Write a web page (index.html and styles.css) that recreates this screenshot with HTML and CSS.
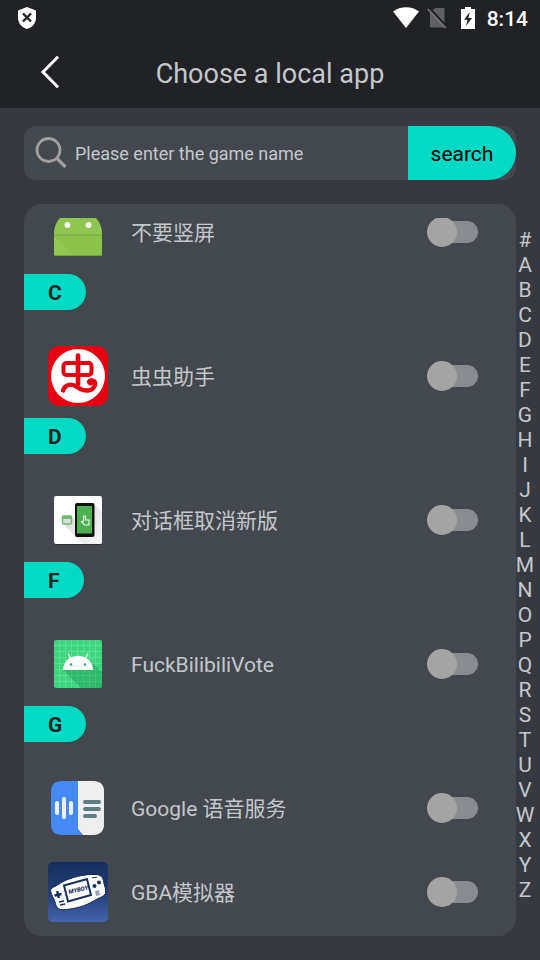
FILE: index.html
```html
<!DOCTYPE html>
<html lang="en">
<head>
<meta charset="utf-8">
<meta name="viewport" content="width=device-width, initial-scale=1">
<title>Choose a local app</title>
<link rel="stylesheet" href="styles.css">
</head>
<body>
<div class="statusbar">
  <svg class="status-shield" width="20" height="24" viewBox="0 0 20 24"><path d="M10 1 19 4.500V12C19 17.500 15 21.500 10 23 5 21.500 1 17.500 1 12V4.500Z" fill="#fff"/><path d="m6 7.500 8 8m0-8-8 8" stroke="#212226" stroke-width="2.400"/></svg>
  <div class="status-right">
    <svg class="wifi" width="26" height="22" viewBox="0 0 26 22"><path d="M0 4.500C7-1.200 19-1.200 26 4.500L13 21Z" fill="#fff"/></svg>
    <svg class="sim" width="20" height="22" viewBox="0 0 20 22"><path d="M8 1h8.500q1 0 1 1v17.500q0 1-1 1H4q-1 0-1-1V6Z" fill="#5f6063"/><path d="m2.500 1 18 19.500" stroke="#212226" stroke-width="2"/><path d="m.700 2 18 19" stroke="#77787a" stroke-width="1.600"/></svg>
    <svg class="battery" width="14" height="22" viewBox="0 0 14 22"><path d="M4 0h6v2h4v20H0V2h4Z" fill="#fff"/><path d="M8.700 5 3 12.700h3.500L5 19l6-8H7.400Z" fill="#212226"/></svg>
    <span class="clock">8:14</span>
  </div>
</div>
<header class="titlebar">
  <button class="back" aria-label="Back"><svg width="20" height="34" viewBox="0 0 20 34"><path d="M18 1.800 3 17l15 15.200" fill="none" stroke="#fff" stroke-width="3"/></svg></button>
  <h1>Choose a local app</h1>
</header>
<form class="search">
  <label class="search-icon" for="query" aria-label="Game name"><svg width="32" height="32" viewBox="0 0 32 32" fill="none" stroke="#a09f9e"><circle cx="13.500" cy="13" r="11.500" stroke-width="2.800"/><path d="m21.500 21 9 9" stroke-width="3.200"/></svg></label>
  <input id="query" type="text" placeholder="Please enter the game name">
  <button type="button">search</button>
</form>
<main class="content">
  <section class="card">
    <div class="viewport">
      <div class="apps">
        <div class="row">
          <svg class="icon" viewBox="0 0 60 60"><path d="M6 32C6 24 9 19 13 15H47c4 4 7 9 7 17v20q0 2-2 2H8q-2 0-2-2Z" fill="#8fc550"/><path d="M6 33h48v19q0 2-2 2H24L6 35Z" fill="#8bc34a"/><path d="m6 34 20 20H8q-2 0-2-2Z" fill="#91c854"/><path d="M6 33h48" stroke="#76a840"/><path d="M7 53.500h46" stroke="#74a33e"/><circle cx="19.500" cy="23" r="3" fill="#f3f5ef"/><circle cx="40.500" cy="23" r="3" fill="#f3f5ef"/></svg>
          <label for="a1">不要竖屏</label><input id="a1" class="switch" type="checkbox" role="switch">
        </div>
        <h2>C</h2>
        <div class="row">
          <svg class="icon" viewBox="0 0 60 60"><rect width="60" height="60" rx="11" fill="#e60012"/><circle cx="30" cy="30" r="27" fill="#fff"/><g fill="none" stroke="#e60012" stroke-linecap="round" stroke-linejoin="round"><rect x="15.500" y="17" width="28" height="12" rx="3" stroke-width="4"/><path d="M30 9.500V38" stroke-width="4.600"/><path d="M15 44.500C17 38 24 37 29 41c7 5 16 5 18-2 1-5-5-6-6-3" stroke-width="4.400"/><path d="M41 36c0 3 3 3 3 1" stroke-width="2.500"/></g></svg>
          <label for="a2">虫虫助手</label><input id="a2" class="switch" type="checkbox" role="switch">
        </div>
        <h2>D</h2>
        <div class="row">
          <svg class="icon" viewBox="0 0 60 60"><defs><linearGradient id="shade" x2="1" y2="1"><stop stop-color="#d8d8d8"/><stop offset="1" stop-color="#f6f6f6"/></linearGradient></defs><rect x="6" y="7" width="48" height="48" rx="2" fill="#2d3034"/><rect x="6" y="6" width="48" height="48" rx="2" fill="#fff"/><path d="m46 14 8 8v30q0 2-2 2H35L15 34l8-8 8 8V14Z" fill="url(#shade)"/><rect x="27" y="13" width="19.500" height="34" rx="2" fill="#111"/><rect x="29" y="16" width="15" height="27.500" fill="#4caf50"/><rect x="14.500" y="26" width="9" height="8" rx="1" fill="#ddd" stroke="#72b875" stroke-width="1.500"/><path d="M14 26h10v3H14Z" fill="#72b875"/><path d="M35.500 31v-5h2v4h3.500v5h-4.500l-3-3.500Z" fill="none" stroke="#e9f5e9" stroke-width="1.200"/></svg>
          <label for="a3">对话框取消新版</label><input id="a3" class="switch" type="checkbox" role="switch">
        </div>
        <h2>F</h2>
        <div class="row">
          <svg class="icon" viewBox="0 0 60 60"><rect x="6" y="6" width="48" height="48" rx="2" fill="#3dd680"/><path d="M11.500 6v48m6-48v48m6-48v48m6-48v48m6-48v48m6-48v48m6-48v48M6 11.500h48m-48 6h48m-48 6h48m-48 6h48m-48 6h48m-48 6h48m-48 6h48" stroke="#68e39d" stroke-width=".7"/><path d="m15 36 18 18h19q2 0 2-2V38l-9-9v7Z" fill="#198c54" opacity=".38"/><path d="M15 36C16 17 44 17 45 36Z" fill="#fff"/><path d="m23 25-3-5.500M37 25l3-5.500" stroke="#e9fff2" stroke-width="1.400"/><circle cx="23" cy="30.500" r="1.300" fill="#35a56a"/><circle cx="37" cy="30.500" r="1.300" fill="#35a56a"/></svg>
          <label for="a4">FuckBilibiliVote</label><input id="a4" class="switch" type="checkbox" role="switch">
        </div>
        <h2>G</h2>
        <div class="row">
          <svg class="icon" viewBox="0 0 60 60"><path d="M30 2.500h15q11 0 11 11v31q0 11-11 11H36l-6-6Z" transform="translate(0 1)" fill="#eeeeef"/><path d="M14 3h16v47q0 2 5 7H14Q3 57 3 46V14Q3 3 14 3Z" fill="#4688f4"/><path d="M30 3h15q11 0 11 11v31q0 12-11 12H35l-5-6Z" fill="#eeeeef"/><g stroke-linecap="round" stroke-width="4"><path d="M9 25v10m7-14v18m7-14v10" stroke="#eaf1fc"/><path d="M37 24h14m-14 7h14m-14 7h10" stroke="#607d86"/></g></svg>
          <label for="a5">Google 语音服务</label><input id="a5" class="switch" type="checkbox" role="switch">
        </div>
        <div class="row">
          <svg class="icon" viewBox="0 0 60 60"><defs><linearGradient id="night" x2="0" y2="1"><stop stop-color="#172e5e"/><stop offset=".5" stop-color="#203d76"/><stop offset="1" stop-color="#4364ad"/></linearGradient></defs><rect width="60" height="60" rx="5" fill="url(#night)"/><path d="M2.500 28C3 25 10 24 14 20 24 15 37 12 47 12.500c6 0 8 3 8.500 7 1 5 3 8 2 12-2 4-7 4-11 7-10 6-19 8-28 9-7 1-10-1-11-6-1-5-5-9-5-13.500Z" fill="#fff" stroke="#15264a"/><path d="m16 23.500 23-6.500 4 16-23 6.500Z" fill="#fff" stroke="#172f60" stroke-width="2"/><text class="console-name" x="21" y="32" transform="rotate(-13 21 32)">MYBOY</text><path d="m6.500 33.500 7-1.500m-4.300-3 1.600 7" stroke="#172f60" stroke-width="2.400"/><path d="m11 40 5-1m-4 4 5-1" stroke="#172f60" stroke-width="1.500"/><circle cx="46.500" cy="24" r="2" fill="#172f60"/><circle cx="51" cy="20.500" r="2" fill="#172f60"/><path d="m47 29 4-1 1 5-4 1Z" fill="#9aa3b5"/><path d="m44 16 5-1" stroke="#172f60"/></svg>
          <label for="a6">GBA模拟器</label><input id="a6" class="switch" type="checkbox" role="switch">
        </div>
      </div>
    </div>
  </section>
  <nav class="index" aria-label="Alphabet">
    <a href="#">#</a><a href="#">A</a><a href="#">B</a><a href="#">C</a><a href="#">D</a><a href="#">E</a><a href="#">F</a><a href="#">G</a><a href="#">H</a><a href="#">I</a><a href="#">J</a><a href="#">K</a><a href="#">L</a><a href="#">M</a><a href="#">N</a><a href="#">O</a><a href="#">P</a><a href="#">Q</a><a href="#">R</a><a href="#">S</a><a href="#">T</a><a href="#">U</a><a href="#">V</a><a href="#">W</a><a href="#">X</a><a href="#">Y</a><a href="#">Z</a>
  </nav>
</main>
</body>
</html>
```

FILE: styles.css
```css
* { box-sizing: border-box; }

body {
  margin: 0;
  min-height: 100vh;
  display: flex;
  flex-direction: column;
  background: #373941;
  color: #c3c7ca;
  font-family: Roboto, "Noto Sans CJK SC", sans-serif;
  font-size: 21px;
}

svg { display: block; }

button, input { font: inherit; border: 0; margin: 0; }

.statusbar {
  display: flex;
  justify-content: space-between;
  align-items: center;
  height: 36px;
  padding: 0 12px 0 17px;
  background: #212226;
}

.status-right { display: flex; align-items: center; height: 34px; }

.wifi { margin-right: 8px; }

.sim { margin-right: 14px; }

.battery { margin-right: 12px; }

.clock { color: #fff; font-weight: 500; line-height: 36px; padding-top: 2px; }

.titlebar {
  display: grid;
  grid-template-columns: 100px 1fr 100px;
  align-items: center;
  height: 72px;
  background: #212226;
}

.titlebar h1 {
  margin: 0;
  padding-top: 4px;
  font-size: 27px;
  font-weight: 400;
  line-height: 32px;
  text-align: center;
}

.back { justify-self: center; padding: 0; background: none; }

.search {
  display: flex;
  align-items: center;
  height: 54px;
  margin: 18px 24px 24px;
  border-radius: 12px;
  background: #43474e;
}

.search-icon { padding: 0 8px 0 11px; }

.search input {
  flex: 1;
  min-width: 0;
  height: 54px;
  padding: 0;
  background: none;
  color: #c3c7ca;
  font-size: 18px;
  outline: 0;
}

.search input::placeholder { color: #c3c7ca; opacity: 1; }

.search button {
  width: 108px;
  height: 54px;
  padding: 2px 0 0;
  border-radius: 0 27px 27px 0;
  background: #03dac5;
  color: #000;
}

.content { display: flex; padding: 0 0 24px 24px; }

.card {
  flex: 1;
  padding: 14px 0;
  border-radius: 18px;
  background: #43474e;
}

.viewport { overflow: hidden; }

/* The list rests partly scrolled: its first and last rows run past the viewport. */
.apps { margin: -28px 0 -12px; }

.row {
  display: flex;
  align-items: center;
  gap: 23px;
  height: 84px;
  padding: 0 38px 0 24px;
}

.row label { flex: 1; padding-top: 2px; line-height: 30px; }

.icon { flex: none; width: 60px; height: 60px; }

.apps h2 {
  width: fit-content;
  height: 36px;
  margin: 0 0 24px;
  padding: 1px 24px 0;
  border-radius: 0 18px 18px 0;
  background: #03dac5;
  color: #212226;
  font-size: 21px;
  font-weight: 700;
  line-height: 36px;
}

.switch {
  appearance: none;
  display: flex;
  align-items: center;
  flex: none;
  width: 51px;
  height: 30px;
}

.switch::before {
  content: "";
  width: 30px;
  height: 30px;
  border-radius: 50%;
  background: #a4a4a4;
  z-index: 1;
}

.switch::after {
  content: "";
  width: 36px;
  height: 22px;
  margin-left: -15px;
  border-radius: 11px;
  background: #888b90;
}

.index {
  flex: none;
  display: flex;
  flex-direction: column;
  align-items: center;
  width: 18px;
  margin-right: 6px;
  padding-top: 24px;
}

.index a { color: #c3c7ca; line-height: 25px; text-decoration: none; }

.console-name { fill: #172f60; font: italic 900 6px Roboto, sans-serif; }
```
